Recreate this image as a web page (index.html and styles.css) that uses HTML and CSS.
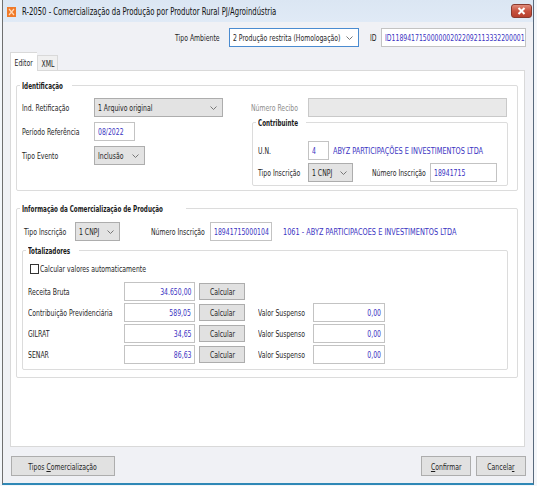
FILE: index.html
```html
<!DOCTYPE html>
<html>

<head>
  <meta charset="utf-8" />
  <title>R-2050 - Comercialização da Produção</title>
  <link rel="stylesheet" href="styles.css">
</head>

<body>
  <div class="janela">
    <div class="barra-titulo">
      <svg class="icone" width="9" height="10" viewBox="0 0 9 10">
        <rect width="9" height="10" fill="#f07a2a" />
        <path d="M2 2l5 6M7 2l-5 6" stroke="#ffd9b8" stroke-width="1.2" />
      </svg>
      <span class="titulo"><span class="t">R-2050 - Comercialização da Produção por Produtor Rural PJ/Agroindústria</span></span>
      <div class="fechar">
        <svg width="9" height="8" viewBox="0 0 9 8">
          <path d="M1.5 1l6 6M7.5 1l-6 6" stroke="#fff" stroke-width="2" />
        </svg>
      </div>
    </div>

    <div class="cliente">
      <div class="linha-topo">
        <span class="rotulo w54"><span class="t">Tipo Ambiente</span></span>
        <div class="combo foco w130"><span class="t">2 Produção restrita (Homologação)</span>
          <svg class="seta" width="7" height="4" viewBox="0 0 7 4"><path d="M0.5 0.5l3 3 3-3" fill="none" stroke="#777" /></svg>
        </div>
        <span class="rotulo w11 ml11"><span class="t">ID</span></span>
        <div class="campo w145"><span class="t">ID1189417150000002022092113332200001</span></div>
      </div>

      <div class="abas">
        <div class="aba ativa"><span class="t cen">Editor</span></div>
        <div class="aba"><span class="t cen">XML</span></div>
      </div>

      <div class="painel">
        <fieldset class="grupo identificacao">
          <legend class="w48"><span class="t">Identificação</span></legend>
          <div class="ident-grid">
            <div class="coluna">
              <div class="linha">
                <span class="rotulo w72"><span class="t">Ind. Retificação</span></span>
                <div class="combo w129"><span class="t">1 Arquivo original</span>
                  <svg class="seta" width="7" height="4" viewBox="0 0 7 4"><path d="M0.5 0.5l3 3 3-3" fill="none" stroke="#777" /></svg>
                </div>
              </div>
              <div class="linha">
                <span class="rotulo w72"><span class="t">Período Referência</span></span>
                <div class="campo w41"><span class="t">08/2022</span></div>
              </div>
              <div class="linha">
                <span class="rotulo w72"><span class="t">Tipo Evento</span></span>
                <div class="combo w51"><span class="t">Inclusão</span>
                  <svg class="seta" width="7" height="4" viewBox="0 0 7 4"><path d="M0.5 0.5l3 3 3-3" fill="none" stroke="#777" /></svg>
                </div>
              </div>
            </div>
            <div class="coluna">
              <div class="linha">
                <span class="rotulo desab w57"><span class="t">Número Recibo</span></span>
                <div class="campo desab w199"></div>
              </div>
              <fieldset class="grupo contribuinte">
                <legend class="w46"><span class="t">Contribuinte</span></legend>
                <div class="linha">
                  <span class="rotulo w50"><span class="t">U.N.</span></span>
                  <div class="campo w21"><span class="t">4</span></div>
                  <span class="nome"><span class="t">ABYZ PARTICIPAÇÕES E INVESTIMENTOS LTDA</span></span>
                </div>
                <div class="linha">
                  <span class="rotulo w50"><span class="t">Tipo Inscrição</span></span>
                  <div class="combo w45"><span class="t">1 CNPJ</span>
                    <svg class="seta" width="7" height="4" viewBox="0 0 7 4"><path d="M0.5 0.5l3 3 3-3" fill="none" stroke="#777" /></svg>
                  </div>
                  <span class="rotulo w58 ml19"><span class="t">Número Inscrição</span></span>
                  <div class="campo w67"><span class="t">18941715</span></div>
                </div>
              </fieldset>
            </div>
          </div>
        </fieldset>

        <fieldset class="grupo informacao">
          <legend class="w162"><span class="t">Informação da Comercialização de Produção</span></legend>
          <div class="linha linha-inscricao">
            <span class="rotulo w51"><span class="t">Tipo Inscrição</span></span>
            <div class="combo w45"><span class="t">1 CNPJ</span>
              <svg class="seta" width="7" height="4" viewBox="0 0 7 4"><path d="M0.5 0.5l3 3 3-3" fill="none" stroke="#777" /></svg>
            </div>
            <span class="rotulo w59 ml31"><span class="t">Número Inscrição</span></span>
            <div class="campo w62"><span class="t">18941715000104</span></div>
            <span class="nome ml11"><span class="t">1061 - ABYZ PARTICIPACOES E INVESTIMENTOS LTDA</span></span>
          </div>

          <fieldset class="grupo totalizadores">
            <legend class="w49"><span class="t">Totalizadores</span></legend>
            <label class="checagem"><span class="caixa"></span><span class="t">Calcular valores automaticamente</span></label>
            <div class="valores">
              <div class="linha">
                <span class="rotulo w96"><span class="t">Receita Bruta</span></span>
                <div class="campo num w71"><span class="t dir">34.650,00</span></div>
                <div class="botao calc"><span class="t cen">Calcular</span></div>
              </div>
              <div class="linha">
                <span class="rotulo w96"><span class="t">Contribuição Previdenciária</span></span>
                <div class="campo num w71"><span class="t dir">589,05</span></div>
                <div class="botao calc"><span class="t cen">Calcular</span></div>
                <span class="rotulo w55 ml13"><span class="t">Valor Suspenso</span></span>
                <div class="campo num w72"><span class="t dir">0,00</span></div>
              </div>
              <div class="linha">
                <span class="rotulo w96"><span class="t">GILRAT</span></span>
                <div class="campo num w71"><span class="t dir">34,65</span></div>
                <div class="botao calc"><span class="t cen">Calcular</span></div>
                <span class="rotulo w55 ml13"><span class="t">Valor Suspenso</span></span>
                <div class="campo num w72"><span class="t dir">0,00</span></div>
              </div>
              <div class="linha">
                <span class="rotulo w96"><span class="t">SENAR</span></span>
                <div class="campo num w71"><span class="t dir">86,63</span></div>
                <div class="botao calc"><span class="t cen">Calcular</span></div>
                <span class="rotulo w55 ml13"><span class="t">Valor Suspenso</span></span>
                <div class="campo num w72"><span class="t dir">0,00</span></div>
              </div>
            </div>
          </fieldset>
        </fieldset>
      </div>

      <div class="rodape">
        <div class="botao w104"><span class="t cen">Tipos <u>C</u>omercialização</span></div>
        <div class="acoes">
          <div class="botao w50"><span class="t cen"><u>C</u>onfirmar</span></div>
          <div class="botao w50"><span class="t cen">Cancela<u>r</u></span></div>
        </div>
      </div>
    </div>
  </div>
</body>

</html>
```

FILE: styles.css
```css
body {
  margin: 0;
  background: #f3f6fa;
  font-family: "DejaVu Sans Condensed", "DejaVu Sans", sans-serif;
  font-size: 9.5px;
  color: #1e1e1e;
}

/* texto estreito, como o da captura */
.t {
  display: inline-block;
  white-space: nowrap;
  transform: scaleX(0.72);
  transform-origin: left center;
}

.t.dir {
  transform-origin: right center;
}

.t.cen {
  transform-origin: center;
}

.janela {
  margin-left: 2px;
  width: 530px;
  height: 483px;
  border-left: 1px solid #6f6f6f;
  border-right: 1px solid #58697c;
  border-bottom: 2px solid #2f88b6;
  background: #f0f1f5;
  display: flex;
  flex-direction: column;
}

/* barra de titulo */
.barra-titulo {
  height: 22px;
  flex: none;
  display: flex;
  align-items: center;
  padding-left: 4px;
  background: linear-gradient(#dbe6f3, #e0eaf6);
}

.icone {
  margin-top: 1px;
}

.titulo {
  flex: 1;
  min-width: 0;
  margin-left: 6px;
  font-size: 11px;
  color: #111;
}

.titulo .t {
  transform: scaleX(0.695);
}

.fechar {
  flex: none;
  margin-right: 1px;
  width: 21px;
  height: 14px;
  box-sizing: border-box;
  border: 1px solid #8a3a2e;
  border-radius: 3px;
  background: linear-gradient(#e08c7c, #c8523f 50%, #b7402e);
  display: flex;
  align-items: center;
  justify-content: center;
}

.cliente {
  flex: 1;
  display: flex;
  flex-direction: column;
}

/* linha do topo */
.linha-topo {
  margin-top: 6px;
  height: 19px;
  display: flex;
  align-items: center;
  justify-content: flex-end;
  padding-right: 7px;
}

/* abas */
.abas {
  margin: 5px 0 0 7px;
  display: flex;
  align-items: flex-end;
}

.aba {
  height: 15px;
  box-sizing: border-box;
  width: 21px;
  border: 1px solid #d9d9d9;
  border-bottom: none;
  background: #f0f0f0;
  display: flex;
  align-items: center;
  justify-content: center;
}

.aba.ativa {
  width: 27px;
  height: 19px;
  background: #fff;
  margin-bottom: -1px;
  position: relative;
  border-right: none;
}

.painel {
  margin-left: 7px;
  width: 515px;
  height: 377px;
  box-sizing: border-box;
  border: 1px solid #d9d9d9;
  background: #fff;
}

/* grupos */
.grupo {
  margin: 0;
  border: 1px solid #dcdcdc;
  border-radius: 2px;
  min-width: 0;
}

.grupo legend {
  padding: 0 2px;
  margin-left: -2px;
  font-weight: bold;
  font-size: 9.5px;
  line-height: 11px;
  color: #1a1a1a;
  white-space: nowrap;
}

.grupo legend .t {
  transform: scaleX(0.66);
}

.identificacao {
  margin: 9px 0 0 5px;
  width: 502px;
  box-sizing: border-box;
  padding: 7px 0 4px 5px;
}

.ident-grid {
  display: grid;
  grid-template-columns: 229px 1fr;
}

.coluna {
  display: flex;
  flex-direction: column;
  gap: 5px;
}

.coluna + .coluna {
  gap: 0;
}

.linha {
  height: 19px;
  display: flex;
  align-items: center;
}

.contribuinte {
  margin-left: 1px;
  width: 256px;
  box-sizing: border-box;
  padding: 13px 0 3px 5px;
  display: flex;
  flex-direction: column;
  gap: 3px;
}

.informacao {
  margin: 12px 0 0 5px;
  width: 502px;
  box-sizing: border-box;
  padding: 8px 0 7px 5px;
}

.linha-inscricao {
  margin-left: 2px;
}

.totalizadores {
  margin-top: 4px;
  width: 486px;
  box-sizing: border-box;
  padding: 7px 0 5px 5px;
}

.checagem {
  display: flex;
  align-items: center;
  height: 11px;
  margin-left: 2px;
}

.caixa {
  flex: none;
  width: 7px;
  height: 8px;
  border: 1px solid #333;
  background: #fff;
  margin-right: 1px;
}

.valores {
  margin-top: 8px;
  display: flex;
  flex-direction: column;
  gap: 2px;
}

/* controles */
.rotulo {
  flex: none;
  white-space: nowrap;
}

.rotulo.desab {
  color: #8c8c8c;
}

.campo {
  flex: none;
  height: 19px;
  box-sizing: border-box;
  border: 1px solid #c3c3c3;
  background: #fff;
  color: #3b34c2;
  padding: 0 3px;
  display: flex;
  align-items: center;
  white-space: nowrap;
  overflow: hidden;
}

.campo.desab {
  background: #e9e9e9;
  border-color: #c9c9c9;
}

.campo.num {
  justify-content: flex-end;
}

.combo {
  flex: none;
  height: 19px;
  box-sizing: border-box;
  border: 1px solid #adadad;
  background: #e3e3e3;
  padding: 0 5px 0 3px;
  display: flex;
  align-items: center;
  white-space: nowrap;
}

.combo .t {
  flex: 1;
  min-width: 0;
}

.seta {
  flex: none;
}

.combo.foco {
  border-color: #4a8bd0;
  background: #fff;
}

.nome {
  margin-left: 4px;
  color: #3b34c2;
  white-space: nowrap;
}

.nome .t {
  transform: scaleX(0.77);
}

.botao {
  flex: none;
  height: 20px;
  box-sizing: border-box;
  border: 1px solid #adadad;
  background: #e1e1e1;
  display: flex;
  align-items: center;
  justify-content: center;
  white-space: nowrap;
}

.botao.calc {
  width: 46px;
  height: 17px;
  margin-left: 4px;
}

.rodape {
  margin: 9px 7px 0 8px;
  display: flex;
  justify-content: space-between;
}

.acoes {
  display: flex;
  gap: 5px;
}

/* larguras */
.w11 { width: 11px; }
.w21 { width: 21px; }
.w41 { width: 41px; }
.w45 { width: 45px; }
.w46 { width: 46px; }
.w48 { width: 48px; }
.w49 { width: 49px; }
.w50 { width: 50px; }
.w51 { width: 51px; }
.w54 { width: 54px; }
.w55 { width: 55px; }
.w57 { width: 57px; }
.w58 { width: 58px; }
.w59 { width: 59px; }
.w62 { width: 62px; }
.w67 { width: 67px; }
.w71 { width: 71px; }
.w72 { width: 72px; }
.w96 { width: 96px; }
.w104 { width: 104px; }
.w129 { width: 129px; }
.w130 { width: 130px; }
.w145 { width: 145px; }
.w162 { width: 162px; }
.w199 { width: 199px; }

.ml11 { margin-left: 11px; }
.ml13 { margin-left: 13px; }
.ml19 { margin-left: 19px; }
.ml31 { margin-left: 31px; }
```
